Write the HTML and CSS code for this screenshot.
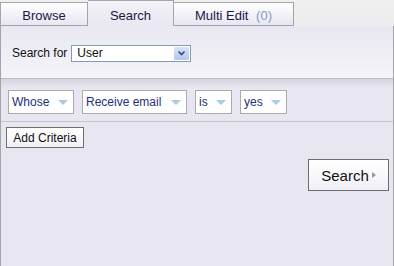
FILE: index.html
```html
<!DOCTYPE html>
<html lang="en">
<head>
	<meta charset="UTF-8">
	<title>Search</title>
	<link rel="stylesheet" href="styles.css">
</head>
<body>
	<div class="tabs">
		<div class="tab tab-browse">Browse</div>
		<div class="tab tab-search active">Search</div>
		<div class="tab tab-multi">Multi Edit <span class="count">(0)</span></div>
	</div>
	<div class="panel">
		<div class="search-for">
			<span class="label">Search for</span>
			<div class="select">
				<span>User</span>
				<span class="select-btn">
					<svg width="11" height="11" viewBox="0 0 11 11"><path d="M2.5 3.5 L5.5 6.5 L8.5 3.5" fill="none" stroke="#3a4a7a" stroke-width="1.6"/></svg>
				</span>
			</div>
		</div>
		<div class="criteria">
			<div class="crit-row">
				<div class="drop w-whose">Whose <i class="tri"></i></div>
				<div class="drop w-email">Receive email <i class="tri"></i></div>
				<div class="drop w-is">is <i class="tri"></i></div>
				<div class="drop w-yes">yes <i class="tri"></i></div>
			</div>
			<div class="add-row">
				<button class="btn-add">Add Criteria</button>
			</div>
			<div class="go-row">
				<button class="btn-search">Search <i class="play"></i></button>
			</div>
		</div>
	</div>
</body>
</html>
```
FILE: styles.css
```css
*{
	margin: 0;
	padding: 0;
	box-sizing: border-box;
}
body{
	font-family: "Liberation Sans", Arial, sans-serif;
	font-size: 13px;
	background: #e8e6f1;
	width: 394px;
	height: 266px;
	overflow: hidden;
}
.tabs{
	display: flex;
	align-items: flex-end;
	height: 26px;
	background: linear-gradient(#f0f0f0, #ececee);
}
.tab{
	height: 24px;
	padding-top: 5px;
	text-align: center;
	color: #1a1840;
	border: 1px solid #a4a4ac;
	background: linear-gradient(#ffffff, #e8e6f2);
}
.tab-browse{
	width: 88px;
}
.tab-search{
	width: 86px;
	border-left: none;
}
.tab-multi{
	width: 120px;
	border-left: none;
}
.tab.active{
	height: 26px;
	padding-top: 7px;
	border-bottom: none;
	background: linear-gradient(#f3f2f7, #e9e7f1);
}
.count{
	color: #8a96c0;
	margin-left: 4px;
}
.panel{
	height: 240px;
	border-left: 1px solid #a4a4ac;
	border-right: 1px solid #a4a4ac;
}
.search-for{
	display: flex;
	align-items: center;
	height: 53px;
	padding: 2px 0 0 11px;
	background: linear-gradient(#e9e7f1, #f5f4f9);
	border-bottom: 1px solid #bcbbc4;
	font-size: 12px;
	color: #111;
}
.label{
	margin-right: 4px;
}
.select{
	display: flex;
	align-items: center;
	justify-content: space-between;
	width: 120px;
	height: 17px;
	padding: 0 1px 0 5px;
	background: #fff;
	border: 1px solid #7f9db9;
	font-size: 12px;
}
.select-btn{
	display: flex;
	align-items: center;
	justify-content: center;
	width: 15px;
	height: 13px;
	background: linear-gradient(#d8e4f8, #b4c8ee);
	border-radius: 1px;
}
.criteria{
	padding-top: 11px;
	background: linear-gradient(#d6d4de, #e8e6f1 9px);
}
.crit-row{
	display: flex;
	gap: 8px;
	padding: 0 0 7px 7px;
	border-bottom: 1px solid #c6c5cf;
}
.drop{
	display: flex;
	align-items: center;
	justify-content: space-between;
	height: 24px;
	padding: 0 5px 0 3px;
	background: #fff;
	border: 1px solid #acacac;
	color: #23307a;
	font-size: 12px;
}
.w-whose{ width: 66px; }
.w-email{ width: 105px; }
.w-is{ width: 37px; }
.w-yes{ width: 47px; }
.tri{
	width: 0;
	height: 0;
	border-left: 5px solid transparent;
	border-right: 5px solid transparent;
	border-top: 5px solid #a8cce4;
}
.add-row{
	padding: 5px 0 0 5px;
}
.btn-add{
	height: 21px;
	width: 78px;
	font-family: inherit;
	font-size: 12px;
	color: #111;
	background: linear-gradient(#ffffff, #f1f0f8);
	border: 1px solid #6e6e6e;
}
.go-row{
	display: flex;
	justify-content: flex-end;
	padding: 11px 4px 0 0;
}
.btn-search{
	display: flex;
	align-items: center;
	justify-content: center;
	gap: 3px;
	height: 32px;
	width: 81px;
	font-family: inherit;
	font-size: 15px;
	color: #111;
	background: linear-gradient(#ffffff, #f1f0f8);
	border: 1px solid #6e6e6e;
}
.play{
	width: 0;
	height: 0;
	border-top: 3px solid transparent;
	border-bottom: 3px solid transparent;
	border-left: 4px solid #999;
}
```
